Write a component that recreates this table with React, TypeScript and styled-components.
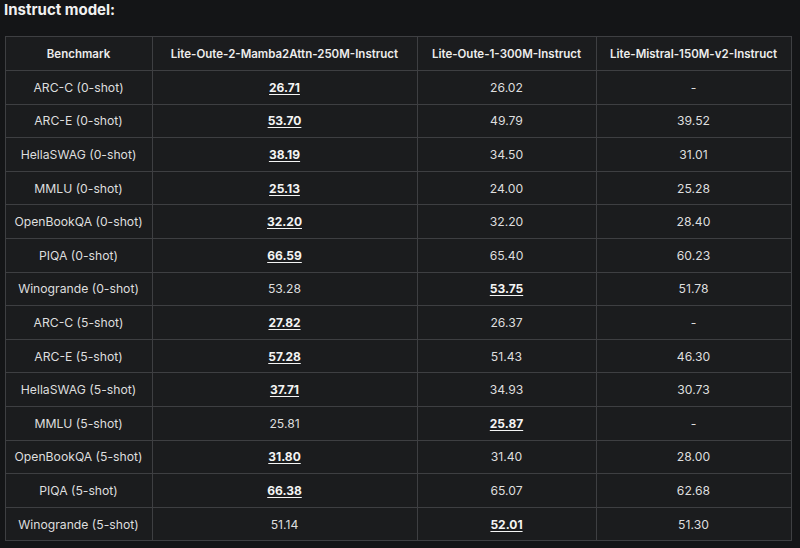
import React from "react";
import styled, { createGlobalStyle } from "styled-components";

type Row = {
  name: string;
  values: string[];
  best: number;
};

const columns = [
  "Benchmark",
  "Lite-Oute-2-Mamba2Attn-250M-Instruct",
  "Lite-Oute-1-300M-Instruct",
  "Lite-Mistral-150M-v2-Instruct",
];

const rows: Row[] = [
  { name: "ARC-C (0-shot)", values: ["26.71", "26.02", "-"], best: 0 },
  { name: "ARC-E (0-shot)", values: ["53.70", "49.79", "39.52"], best: 0 },
  { name: "HellaSWAG (0-shot)", values: ["38.19", "34.50", "31.01"], best: 0 },
  { name: "MMLU (0-shot)", values: ["25.13", "24.00", "25.28"], best: 0 },
  { name: "OpenBookQA (0-shot)", values: ["32.20", "32.20", "28.40"], best: 0 },
  { name: "PIQA (0-shot)", values: ["66.59", "65.40", "60.23"], best: 0 },
  { name: "Winogrande (0-shot)", values: ["53.28", "53.75", "51.78"], best: 1 },
  { name: "ARC-C (5-shot)", values: ["27.82", "26.37", "-"], best: 0 },
  { name: "ARC-E (5-shot)", values: ["57.28", "51.43", "46.30"], best: 0 },
  { name: "HellaSWAG (5-shot)", values: ["37.71", "34.93", "30.73"], best: 0 },
  { name: "MMLU (5-shot)", values: ["25.81", "25.87", "-"], best: 1 },
  { name: "OpenBookQA (5-shot)", values: ["31.80", "31.40", "28.00"], best: 0 },
  { name: "PIQA (5-shot)", values: ["66.38", "65.07", "62.68"], best: 0 },
  { name: "Winogrande (5-shot)", values: ["51.14", "52.01", "51.30"], best: 1 },
];

const widths = [147, 265, 179, 195];

const GlobalStyle = createGlobalStyle`
  html, body {
    margin: 0;
    background: #141517;
  }
  body {
    font-family: Inter, "Noto Sans", sans-serif;
    color: #e3e3e3;
  }
`;

const Page = styled.div`
  width: 800px;
  height: 548px;
  padding: 1px 4px 0;
  box-sizing: border-box;
  overflow: hidden;
`;

const Title = styled.h3`
  margin: 0;
  height: 35px;
  font-size: 15px;
  font-weight: 700;
  line-height: 18px;
  color: #f1f1f1;
`;

const Table = styled.table`
  border-collapse: collapse;
  table-layout: fixed;
  width: 787px;
  margin-left: 0.5px;
  background: #1b1c1e;
`;

const Th = styled.th`
  height: 33px;
  padding: 0;
  border: 1px solid #3e3f42;
  font-size: 11.5px;
  font-weight: 600;
  color: #ececec;
  text-align: center;
`;

const Td = styled.td`
  height: 32.6px;
  padding: 0;
  border: 1px solid #3e3f42;
  font-size: 12.2px;
  font-weight: 400;
  color: #dedede;
  text-align: center;
`;

const Best = styled.span`
  font-weight: 700;
  font-size: 12px;
  color: #f4f4f4;
  text-decoration: underline;
  text-underline-offset: 2px;
  text-decoration-thickness: 1px;
`;

export default function App() {
  return (
    <Page>
      <GlobalStyle />
      <Title>Instruct model:</Title>
      <Table>
        <colgroup>
          {widths.map((w, i) => (
            <col key={i} style={{ width: w }} />
          ))}
        </colgroup>
        <thead>
          <tr>
            {columns.map((c) => (
              <Th key={c}>{c}</Th>
            ))}
          </tr>
        </thead>
        <tbody>
          {rows.map((r) => (
            <tr key={r.name}>
              <Td>{r.name}</Td>
              {r.values.map((v, i) => (
                <Td key={i}>{i === r.best ? <Best>{v}</Best> : v}</Td>
              ))}
            </tr>
          ))}
        </tbody>
      </Table>
    </Page>
  );
}
